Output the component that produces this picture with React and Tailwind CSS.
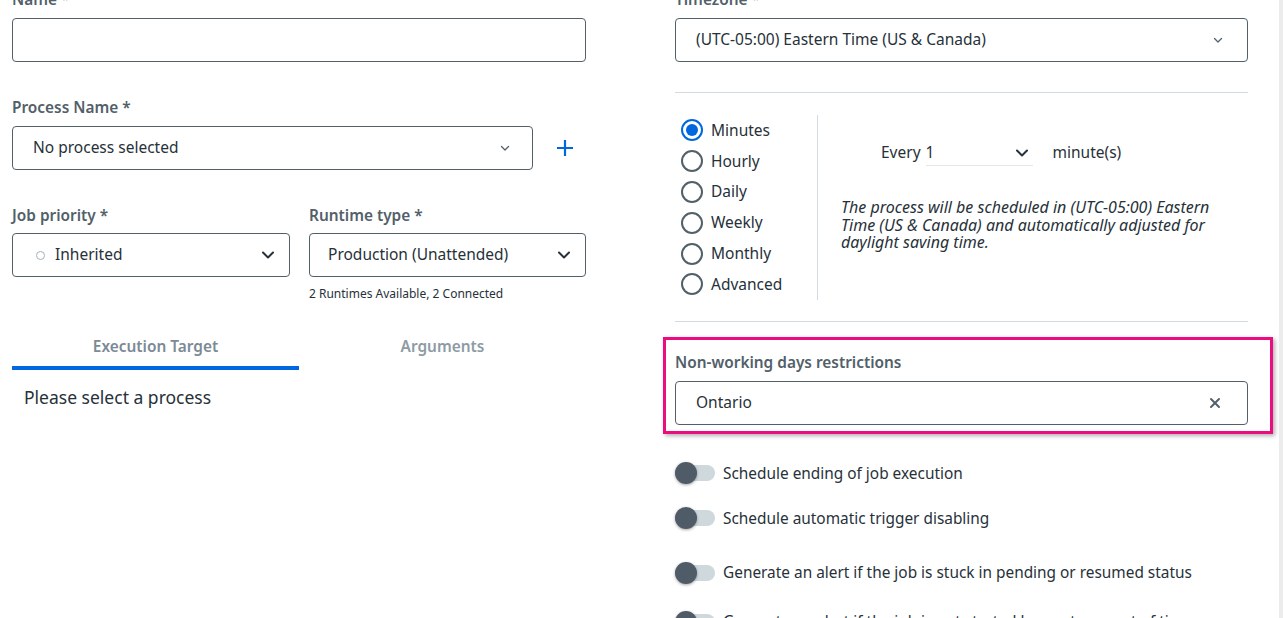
import { X } from "lucide-react";

const font = { fontFamily: '"Noto Sans", "Open Sans", sans-serif' };

function Chevron({ bold = false }) {
  return bold ? (
    <svg width="14" height="14" viewBox="0 0 14 14" className="text-[#273139]">
      <path d="M2 4.5 L7 9.5 L12 4.5" fill="none" stroke="currentColor" strokeWidth="2" strokeLinecap="round" strokeLinejoin="round" />
    </svg>
  ) : (
    <svg width="10" height="10" viewBox="0 0 10 10" className="text-[#526069]">
      <path d="M1.5 3.5 L5 7 L8.5 3.5" fill="none" stroke="currentColor" strokeWidth="1.3" strokeLinecap="round" strokeLinejoin="round" />
    </svg>
  );
}

function Label({ children, className = "" }) {
  return (
    <div className={`h-5 text-[15.4px] leading-5 font-semibold text-[#526069] ${className}`}>
      {children}
    </div>
  );
}

function Box({ children, className = "" }) {
  return (
    <div className={`h-[44px] border border-[#526069] rounded-[4px] flex items-center bg-white ${className}`}>
      {children}
    </div>
  );
}

function Radio({ label, checked }) {
  return (
    <div className="h-[30.8px] flex items-center gap-2 pl-[6px]">
      {checked ? (
        <span className="w-[22px] h-[22px] rounded-full border-2 border-[#0067df] flex items-center justify-center">
          <span className="w-3 h-3 rounded-full bg-[#0067df]" />
        </span>
      ) : (
        <span className="w-[22px] h-[22px] rounded-full border-2 border-[#526069]" />
      )}
      <span className="text-[15.5px] text-[#273139]">{label}</span>
    </div>
  );
}

function Toggle({ label, className = "" }) {
  return (
    <div className={`flex items-center gap-2 ${className}`}>
      <div className="relative w-10 h-[22px] flex items-center">
        <div className="w-10 h-4 rounded-full bg-[#cfd8dd]" />
        <div className="absolute left-0 top-0 w-[22px] h-[22px] rounded-full bg-[#4f5c68] shadow-[0_1px_3px_rgba(0,0,0,0.35)]" />
      </div>
      <span className="text-[15.4px] text-[#273139]">{label}</span>
    </div>
  );
}

export default function App() {
  return (
    <div style={font} className="relative w-[1283px] h-[618px] overflow-hidden bg-white">
      <div className="flex mt-[-10px] pl-3">
        {/* left column */}
        <div className="w-[574px] shrink-0">
          <Label>Name *</Label>
          <Box className="mt-2" />

          <Label className="mt-9">Process Name *</Label>
          <div className="mt-2 flex items-center">
            <Box className="w-[521px] pl-5 pr-[22px] justify-between">
              <span className="text-[15.5px] text-[#273139]">No process selected</span>
              <Chevron />
            </Box>
            <svg width="18" height="18" viewBox="0 0 18 18" className="ml-[23px] text-[#0067df]">
              <path d="M9 1 V17 M1 9 H17" stroke="currentColor" strokeWidth="2.2" />
            </svg>
          </div>

          <div className="mt-9 flex gap-[19px]">
            <div className="w-[278px]">
              <Label>Job priority *</Label>
              <Box className="mt-[7px] pl-[23px] pr-[14px]">
                <span className="w-[9px] h-[9px] rounded-full border-[1.5px] border-[#a4b1b8]" />
                <span className="ml-[10px] text-[15.5px] text-[#273139] flex-1">Inherited</span>
                <Chevron bold />
              </Box>
            </div>
            <div className="w-[277px]">
              <Label>Runtime type *</Label>
              <Box className="mt-[7px] pl-[18px] pr-[14px] justify-between">
                <span className="text-[15.5px] text-[#273139]">Production (Unattended)</span>
                <Chevron bold />
              </Box>
              <div className="mt-[9px] text-xs leading-4 text-[#273139]">2 Runtimes Available, 2 Connected</div>
            </div>
          </div>

          <div className="mt-[26px] flex">
            <div className="w-[287px] h-[42px] flex flex-col">
              <div className="flex-1 flex items-center justify-center text-[15.4px] font-semibold text-[#7b8a95]">
                Execution Target
              </div>
              <div className="h-1 bg-[#0067df]" />
            </div>
            <div className="w-[287px] h-[42px] flex flex-col">
              <div className="flex-1 flex items-center justify-center text-[15.4px] font-semibold text-[#8e9ba4]">
                Arguments
              </div>
              <div className="h-1" />
            </div>
          </div>
          <div className="mt-[15px] pl-3 text-[17.5px] leading-6 text-[#273139]">Please select a process</div>
        </div>

        {/* right column */}
        <div className="ml-[89px] w-[573px] shrink-0">
          <Label>Timezone *</Label>
          <Box className="mt-2 pl-5 pr-6 justify-between">
            <span className="text-[15.5px] text-[#273139]">(UTC-05:00) Eastern Time (US &amp; Canada)</span>
            <Chevron />
          </Box>
          <div className="mt-[30px] h-px bg-[#d4dbe0]" />

          <div className="mt-[22px] flex">
            <div className="w-[143px] border-r border-[#d4dbe0]">
              <Radio label="Minutes" checked />
              <Radio label="Hourly" />
              <Radio label="Daily" />
              <Radio label="Weekly" />
              <Radio label="Monthly" />
              <Radio label="Advanced" />
            </div>
            <div className="pl-[23px] pt-[25px]">
              <div className="flex items-center pl-[40px] h-[26px]">
                <span className="text-[15.5px] text-[#273139]">Every</span>
                <div className="ml-[5px] w-[107px] h-[26px] border-b border-[#e3e8eb] flex items-center justify-between pr-1">
                  <span className="text-[15.5px] text-[#273139]">1</span>
                  <Chevron bold />
                </div>
                <span className="ml-5 text-[15.5px] text-[#273139]">minute(s)</span>
              </div>
              <p className="mt-[33px] w-[392px] text-[16px] leading-[17.5px] italic text-[#273139]">
                The process will be scheduled in (UTC-05:00) Eastern Time (US &amp; Canada) and automatically adjusted for daylight saving time.
              </p>
            </div>
          </div>

          <div className="mt-[21px] h-px bg-[#d4dbe0]" />

          <div className="mt-[15px] ml-[-12px] mr-[-25px] border-[3px] border-[#ec0c80] shadow-[2px_2px_4px_rgba(0,0,0,0.3)] pl-[9px] pr-[22px] pt-[13px] pb-[6px]">
            <Label>Non-working days restrictions</Label>
            <Box className="mt-2 pl-5 pr-6 justify-between">
              <span className="text-[15.5px] text-[#273139]">Ontario</span>
              <X size={16} strokeWidth={3} className="text-[#526069]" />
            </Box>
          </div>

          <Toggle className="mt-[28px]" label="Schedule ending of job execution" />
          <Toggle className="mt-[22px]" label="Schedule automatic trigger disabling" />
          <Toggle className="mt-[31px]" label="Generate an alert if the job is stuck in pending or resumed status" />
          <Toggle className="mt-[26px]" label="Generate an alert if the job is not started by a set amount of time" />
        </div>
      </div>
      <div className="absolute right-0 top-0 w-[4px] h-full bg-[#ececec]" />
    </div>
  );
}
